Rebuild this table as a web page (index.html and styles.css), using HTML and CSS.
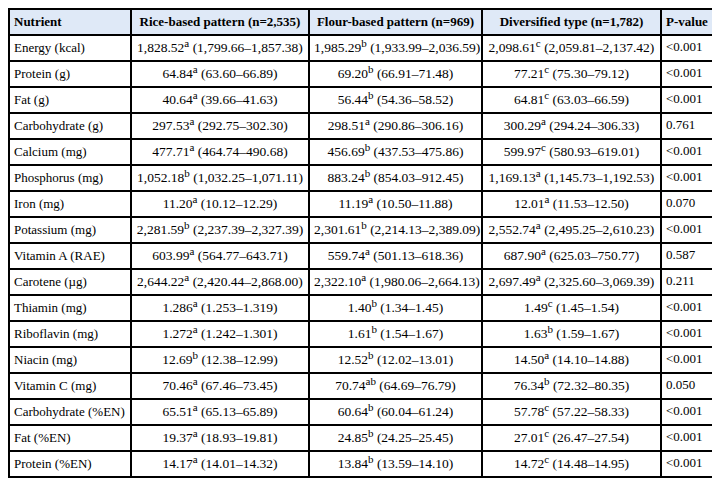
FILE: index.html
```html
<!DOCTYPE html>
<html>
<head>
<meta charset="utf-8">
<link rel="stylesheet" href="styles.css">
</head>
<body>
<table class="tbl">
<colgroup>
<col class="c1"><col class="c2"><col class="c3"><col class="c4"><col class="c5">
</colgroup>
<thead>
<tr><th class="l">Nutrient</th><th>Rice-based pattern (n=2,535)</th><th>Flour-based pattern (n=969)</th><th>Diversified type (n=1,782)</th><th class="l">P-value</th></tr>
</thead>
<tbody>
<tr><td class="l">Energy (kcal)</td><td>1,828.52<sup>a</sup> (1,799.66–1,857.38)</td><td>1,985.29<sup>b</sup> (1,933.99–2,036.59)</td><td>2,098.61<sup>c</sup> (2,059.81–2,137.42)</td><td class="p">&lt;0.001</td></tr>
<tr><td class="l">Protein (g)</td><td>64.84<sup>a</sup> (63.60–66.89)</td><td>69.20<sup>b</sup> (66.91–71.48)</td><td>77.21<sup>c</sup> (75.30–79.12)</td><td class="p">&lt;0.001</td></tr>
<tr><td class="l">Fat (g)</td><td>40.64<sup>a</sup> (39.66–41.63)</td><td>56.44<sup>b</sup> (54.36–58.52)</td><td>64.81<sup>c</sup> (63.03–66.59)</td><td class="p">&lt;0.001</td></tr>
<tr><td class="l">Carbohydrate (g)</td><td>297.53<sup>a</sup> (292.75–302.30)</td><td>298.51<sup>a</sup> (290.86–306.16)</td><td>300.29<sup>a</sup> (294.24–306.33)</td><td class="p">0.761</td></tr>
<tr><td class="l">Calcium (mg)</td><td>477.71<sup>a</sup> (464.74–490.68)</td><td>456.69<sup>b</sup> (437.53–475.86)</td><td>599.97<sup>c</sup> (580.93–619.01)</td><td class="p">&lt;0.001</td></tr>
<tr><td class="l">Phosphorus (mg)</td><td>1,052.18<sup>b</sup> (1,032.25–1,071.11)</td><td>883.24<sup>b</sup> (854.03–912.45)</td><td>1,169.13<sup>a</sup> (1,145.73–1,192.53)</td><td class="p">&lt;0.001</td></tr>
<tr><td class="l">Iron (mg)</td><td>11.20<sup>a</sup> (10.12–12.29)</td><td>11.19<sup>a</sup> (10.50–11.88)</td><td>12.01<sup>a</sup> (11.53–12.50)</td><td class="p">0.070</td></tr>
<tr><td class="l">Potassium (mg)</td><td>2,281.59<sup>b</sup> (2,237.39–2,327.39)</td><td>2,301.61<sup>b</sup> (2,214.13–2,389.09)</td><td>2,552.74<sup>a</sup> (2,495.25–2,610.23)</td><td class="p">&lt;0.001</td></tr>
<tr><td class="l">Vitamin A (RAE)</td><td>603.99<sup>a</sup> (564.77–643.71)</td><td>559.74<sup>a</sup> (501.13–618.36)</td><td>687.90<sup>a</sup> (625.03–750.77)</td><td class="p">0.587</td></tr>
<tr><td class="l">Carotene (µg)</td><td>2,644.22<sup>a</sup> (2,420.44–2,868.00)</td><td>2,322.10<sup>a</sup> (1,980.06–2,664.13)</td><td>2,697.49<sup>a</sup> (2,325.60–3,069.39)</td><td class="p">0.211</td></tr>
<tr><td class="l">Thiamin (mg)</td><td>1.286<sup>a</sup> (1.253–1.319)</td><td>1.40<sup>b</sup> (1.34–1.45)</td><td>1.49<sup>c</sup> (1.45–1.54)</td><td class="p">&lt;0.001</td></tr>
<tr><td class="l">Riboflavin (mg)</td><td>1.272<sup>a</sup> (1.242–1.301)</td><td>1.61<sup>b</sup> (1.54–1.67)</td><td>1.63<sup>b</sup> (1.59–1.67)</td><td class="p">&lt;0.001</td></tr>
<tr><td class="l">Niacin (mg)</td><td>12.69<sup>b</sup> (12.38–12.99)</td><td>12.52<sup>b</sup> (12.02–13.01)</td><td>14.50<sup>a</sup> (14.10–14.88)</td><td class="p">&lt;0.001</td></tr>
<tr><td class="l">Vitamin C (mg)</td><td>70.46<sup>a</sup> (67.46–73.45)</td><td>70.74<sup>ab</sup> (64.69–76.79)</td><td>76.34<sup>b</sup> (72.32–80.35)</td><td class="p">0.050</td></tr>
<tr><td class="l">Carbohydrate (%EN)</td><td>65.51<sup>a</sup> (65.13–65.89)</td><td>60.64<sup>b</sup> (60.04–61.24)</td><td>57.78<sup>c</sup> (57.22–58.33)</td><td class="p">&lt;0.001</td></tr>
<tr><td class="l">Fat (%EN)</td><td>19.37<sup>a</sup> (18.93–19.81)</td><td>24.85<sup>b</sup> (24.25–25.45)</td><td>27.01<sup>c</sup> (26.47–27.54)</td><td class="p">&lt;0.001</td></tr>
<tr><td class="l">Protein (%EN)</td><td>14.17<sup>a</sup> (14.01–14.32)</td><td>13.84<sup>b</sup> (13.59–14.10)</td><td>14.72<sup>c</sup> (14.48–14.95)</td><td class="p">&lt;0.001</td></tr>
</tbody>
</table>
</body>
</html>
```
FILE: styles.css
```css
html, body { background: #fff; }
body {
  margin: 8px;
  font-family: "Liberation Serif", "Times New Roman", serif;
  font-size: 13px;
  color: #000;
}
.tbl {
  border-collapse: collapse;
  table-layout: fixed;
  width: 705px;
  border: 2px solid #000;
}
.c1 { width: 122px; }
.c2 { width: 178px; }
.c3 { width: 173px; }
.c4 { width: 179px; }
.c5 { width: 53px; }
.tbl tr { height: 26px; }
.tbl th, .tbl td {
  border: 2px solid #000;
  padding: 0 4px;
  text-align: center;
  vertical-align: middle;
  white-space: nowrap;
  line-height: 14px;
}
.tbl td { font-size: 13.5px; }
.tbl th {
  background: #dfe9f7;
  font-weight: bold;
}
.tbl .l { text-align: left; font-size: 13px; }
.tbl .p { text-align: left; padding-bottom: 3px; font-size: 13px; }
sup {
  font-size: 11px;
  line-height: 0;
  vertical-align: 5px;
}
```
